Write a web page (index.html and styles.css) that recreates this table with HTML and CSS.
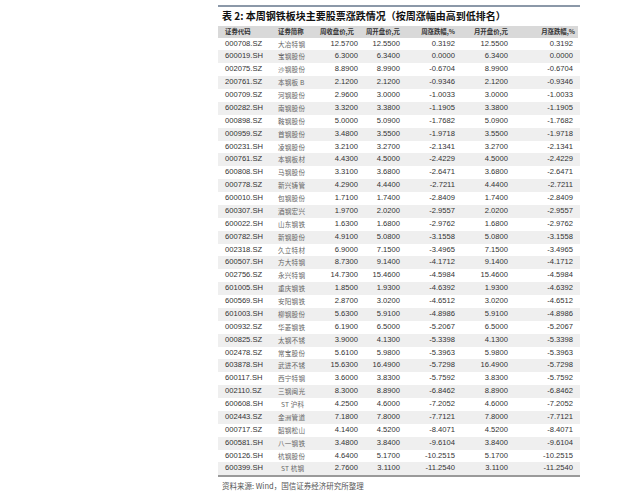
FILE: index.html
```html
<!DOCTYPE html>
<html lang="zh">
<head>
<meta charset="utf-8">
<link rel="stylesheet" href="styles.css">
</head>
<body>
<div class="page">
  <div class="topline"></div>
  <div class="title">表 2: 本周钢铁板块主要股票涨跌情况（按周涨幅由高到低排名）</div>
  <div class="table">
    <div class="row head">
      <div class="c1">证券代码</div><div class="c2">证券简称</div><div class="c3">周收盘价,元</div><div class="c4">周开盘价,元</div><div class="c5">周涨跌幅,%</div><div class="c6">月开盘价,元</div><div class="c7">月涨跌幅,%</div>
    </div>
    <div class="row"><div class="c1">000708.SZ</div><div class="c2">大冶特钢</div><div class="c3">12.5700</div><div class="c4">12.5500</div><div class="c5">0.3192</div><div class="c6">12.5500</div><div class="c7">0.3192</div></div>
    <div class="row"><div class="c1">600019.SH</div><div class="c2">宝钢股份</div><div class="c3">6.3000</div><div class="c4">6.3400</div><div class="c5">0.0000</div><div class="c6">6.3400</div><div class="c7">0.0000</div></div>
    <div class="row"><div class="c1">002075.SZ</div><div class="c2">沙钢股份</div><div class="c3">8.8900</div><div class="c4">8.9900</div><div class="c5">-0.6704</div><div class="c6">8.9900</div><div class="c7">-0.6704</div></div>
    <div class="row"><div class="c1">200761.SZ</div><div class="c2">本钢板 B</div><div class="c3">2.1200</div><div class="c4">2.1200</div><div class="c5">-0.9346</div><div class="c6">2.1200</div><div class="c7">-0.9346</div></div>
    <div class="row"><div class="c1">000709.SZ</div><div class="c2">河钢股份</div><div class="c3">2.9600</div><div class="c4">3.0000</div><div class="c5">-1.0033</div><div class="c6">3.0000</div><div class="c7">-1.0033</div></div>
    <div class="row"><div class="c1">600282.SH</div><div class="c2">南钢股份</div><div class="c3">3.3200</div><div class="c4">3.3800</div><div class="c5">-1.1905</div><div class="c6">3.3800</div><div class="c7">-1.1905</div></div>
    <div class="row"><div class="c1">000898.SZ</div><div class="c2">鞍钢股份</div><div class="c3">5.0000</div><div class="c4">5.0900</div><div class="c5">-1.7682</div><div class="c6">5.0900</div><div class="c7">-1.7682</div></div>
    <div class="row"><div class="c1">000959.SZ</div><div class="c2">首钢股份</div><div class="c3">3.4800</div><div class="c4">3.5500</div><div class="c5">-1.9718</div><div class="c6">3.5500</div><div class="c7">-1.9718</div></div>
    <div class="row"><div class="c1">600231.SH</div><div class="c2">凌钢股份</div><div class="c3">3.2100</div><div class="c4">3.2700</div><div class="c5">-2.1341</div><div class="c6">3.2700</div><div class="c7">-2.1341</div></div>
    <div class="row"><div class="c1">000761.SZ</div><div class="c2">本钢板材</div><div class="c3">4.4300</div><div class="c4">4.5000</div><div class="c5">-2.4229</div><div class="c6">4.5000</div><div class="c7">-2.4229</div></div>
    <div class="row"><div class="c1">600808.SH</div><div class="c2">马钢股份</div><div class="c3">3.3100</div><div class="c4">3.6800</div><div class="c5">-2.6471</div><div class="c6">3.6800</div><div class="c7">-2.6471</div></div>
    <div class="row"><div class="c1">000778.SZ</div><div class="c2">新兴铸管</div><div class="c3">4.2900</div><div class="c4">4.4400</div><div class="c5">-2.7211</div><div class="c6">4.4400</div><div class="c7">-2.7211</div></div>
    <div class="row"><div class="c1">600010.SH</div><div class="c2">包钢股份</div><div class="c3">1.7100</div><div class="c4">1.7400</div><div class="c5">-2.8409</div><div class="c6">1.7400</div><div class="c7">-2.8409</div></div>
    <div class="row"><div class="c1">600307.SH</div><div class="c2">酒钢宏兴</div><div class="c3">1.9700</div><div class="c4">2.0200</div><div class="c5">-2.9557</div><div class="c6">2.0200</div><div class="c7">-2.9557</div></div>
    <div class="row"><div class="c1">600022.SH</div><div class="c2">山东钢铁</div><div class="c3">1.6300</div><div class="c4">1.6800</div><div class="c5">-2.9762</div><div class="c6">1.6800</div><div class="c7">-2.9762</div></div>
    <div class="row"><div class="c1">600782.SH</div><div class="c2">新钢股份</div><div class="c3">4.9100</div><div class="c4">5.0800</div><div class="c5">-3.1558</div><div class="c6">5.0800</div><div class="c7">-3.1558</div></div>
    <div class="row"><div class="c1">002318.SZ</div><div class="c2">久立特材</div><div class="c3">6.9000</div><div class="c4">7.1500</div><div class="c5">-3.4965</div><div class="c6">7.1500</div><div class="c7">-3.4965</div></div>
    <div class="row"><div class="c1">600507.SH</div><div class="c2">方大特钢</div><div class="c3">8.7300</div><div class="c4">9.1400</div><div class="c5">-4.1712</div><div class="c6">9.1400</div><div class="c7">-4.1712</div></div>
    <div class="row"><div class="c1">002756.SZ</div><div class="c2">永兴特钢</div><div class="c3">14.7300</div><div class="c4">15.4600</div><div class="c5">-4.5984</div><div class="c6">15.4600</div><div class="c7">-4.5984</div></div>
    <div class="row"><div class="c1">601005.SH</div><div class="c2">重庆钢铁</div><div class="c3">1.8500</div><div class="c4">1.9300</div><div class="c5">-4.6392</div><div class="c6">1.9300</div><div class="c7">-4.6392</div></div>
    <div class="row"><div class="c1">600569.SH</div><div class="c2">安阳钢铁</div><div class="c3">2.8700</div><div class="c4">3.0200</div><div class="c5">-4.6512</div><div class="c6">3.0200</div><div class="c7">-4.6512</div></div>
    <div class="row"><div class="c1">601003.SH</div><div class="c2">柳钢股份</div><div class="c3">5.6300</div><div class="c4">5.9100</div><div class="c5">-4.8986</div><div class="c6">5.9100</div><div class="c7">-4.8986</div></div>
    <div class="row"><div class="c1">000932.SZ</div><div class="c2">华菱钢铁</div><div class="c3">6.1900</div><div class="c4">6.5000</div><div class="c5">-5.2067</div><div class="c6">6.5000</div><div class="c7">-5.2067</div></div>
    <div class="row"><div class="c1">000825.SZ</div><div class="c2">太钢不锈</div><div class="c3">3.9000</div><div class="c4">4.1300</div><div class="c5">-5.3398</div><div class="c6">4.1300</div><div class="c7">-5.3398</div></div>
    <div class="row"><div class="c1">002478.SZ</div><div class="c2">常宝股份</div><div class="c3">5.6100</div><div class="c4">5.9800</div><div class="c5">-5.3963</div><div class="c6">5.9800</div><div class="c7">-5.3963</div></div>
    <div class="row"><div class="c1">603878.SH</div><div class="c2">武进不锈</div><div class="c3">15.6300</div><div class="c4">16.4900</div><div class="c5">-5.7298</div><div class="c6">16.4900</div><div class="c7">-5.7298</div></div>
    <div class="row"><div class="c1">600117.SH</div><div class="c2">西宁特钢</div><div class="c3">3.6000</div><div class="c4">3.8300</div><div class="c5">-5.7592</div><div class="c6">3.8300</div><div class="c7">-5.7592</div></div>
    <div class="row"><div class="c1">002110.SZ</div><div class="c2">三钢闽光</div><div class="c3">8.3000</div><div class="c4">8.8900</div><div class="c5">-6.8462</div><div class="c6">8.8900</div><div class="c7">-6.8462</div></div>
    <div class="row"><div class="c1">600608.SH</div><div class="c2 st">ST 沪科</div><div class="c3">4.2500</div><div class="c4">4.6000</div><div class="c5">-7.2052</div><div class="c6">4.6000</div><div class="c7">-7.2052</div></div>
    <div class="row"><div class="c1">002443.SZ</div><div class="c2">金洲管道</div><div class="c3">7.1800</div><div class="c4">7.8000</div><div class="c5">-7.7121</div><div class="c6">7.8000</div><div class="c7">-7.7121</div></div>
    <div class="row"><div class="c1">000717.SZ</div><div class="c2">韶钢松山</div><div class="c3">4.1400</div><div class="c4">4.5200</div><div class="c5">-8.4071</div><div class="c6">4.5200</div><div class="c7">-8.4071</div></div>
    <div class="row"><div class="c1">600581.SH</div><div class="c2">八一钢铁</div><div class="c3">3.4800</div><div class="c4">3.8400</div><div class="c5">-9.6104</div><div class="c6">3.8400</div><div class="c7">-9.6104</div></div>
    <div class="row"><div class="c1">600126.SH</div><div class="c2">杭钢股份</div><div class="c3">4.6400</div><div class="c4">5.1700</div><div class="c5">-10.2515</div><div class="c6">5.1700</div><div class="c7">-10.2515</div></div>
    <div class="row"><div class="c1">600399.SH</div><div class="c2 st">ST 杭钢</div><div class="c3">2.7600</div><div class="c4">3.1100</div><div class="c5">-11.2540</div><div class="c6">3.1100</div><div class="c7">-11.2540</div></div>
  </div>
  <div class="source">资料来源: Wind，国信证券经济研究所整理</div>
</div>
</body>
</html>
```

FILE: styles.css
```css
html, body {
  margin: 0;
  padding: 0;
  background: #ffffff;
}

.page {
  width: 362px;
  margin-left: 218px;
  padding-top: 5px;
  font-family: "Liberation Sans", Arial, "Noto Sans CJK SC", sans-serif;
  color: #333333;
}

.topline {
  height: 2px;
  background: #8b98a8;
}

.title {
  height: 18.5px;
  padding-left: 4px;
  font-family: "Noto Sans CJK SC", sans-serif;
  font-weight: 700;
  font-size: 10px;
  line-height: 18.5px;
  color: #111111;
  white-space: nowrap;
}

.table {
  border-bottom: 2px solid #9a9a9a;
}

.row {
  display: grid;
  grid-template-columns: 58px 34px 50px 42px 55px 53px 70px;
  height: 12.88px;
  align-items: center;
  font-size: 7.6px;
  line-height: 12.88px;
  white-space: nowrap;
}

.row:nth-child(odd) {
  background: #efefef;
}

.row.head {
  height: 12px;
  line-height: 12px;
  background: #d9d9d9;
  font-family: "Noto Sans CJK SC", sans-serif;
  font-weight: 700;
  font-size: 6.4px;
  color: #333333;
  margin-right: 2px;
}

.c1 {
  padding-left: 7px;
}

.c2 {
  padding-left: 2px;
  font-family: "Noto Sans CJK SC", sans-serif;
  font-size: 6.6px;
  letter-spacing: 0.2px;
  color: #666666;
}

.c2.st {
  padding-left: 5px;
}

.row.head .c2 {
  font-size: 6.4px;
  letter-spacing: 0;
  color: #333333;
}

.c3, .c4, .c5, .c6, .c7 {
  text-align: right;
}

.c3 { padding-right: 2px; }
.c4 { padding-right: 2px; }
.c5 { padding-right: 2px; }
.c6 { padding-right: 2px; }
.c7 { padding-right: 7px; }

.row.head .c3 { padding-right: 6px; }
.row.head .c7 { padding-right: 5px; }

.source {
  padding-left: 4px;
  padding-top: 3px;
  font-family: "Noto Sans CJK SC", sans-serif;
  font-size: 7.5px;
  line-height: 12px;
  color: #555555;
  white-space: nowrap;
}
```
